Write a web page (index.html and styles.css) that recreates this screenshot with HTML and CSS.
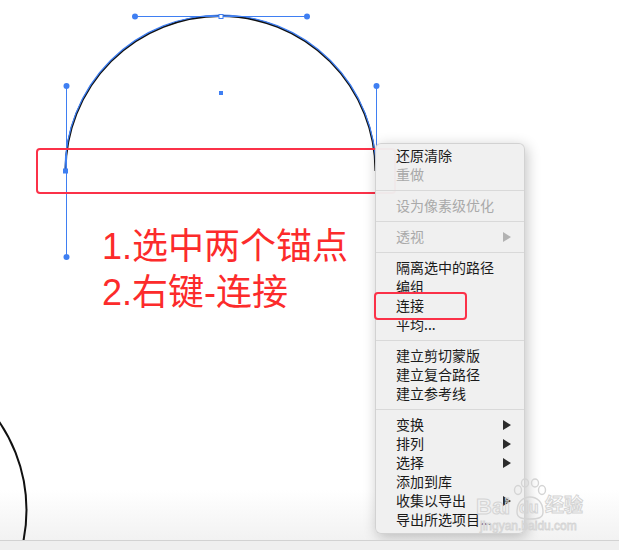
FILE: index.html
```html
<!DOCTYPE html>
<html lang="zh-CN">
<head>
    <meta charset="UTF-8">
    <title>连接锚点</title>
    <link rel="stylesheet" href="styles.css">
</head>
<body>

    <div class="workspace">
        <svg class="artboard" width="619" height="540" viewBox="0 0 619 540">
            <!-- selected path -->
            <path d="M65.5,171 A155,155 0 0 1 375.5,171" fill="none" stroke="#111" stroke-width="2"/>
            <path d="M65,170.5 A155.5,155.5 0 0 1 376,170.5" fill="none" stroke="#3f7ff2" stroke-width="1.2"/>

            <!-- handles -->
            <g stroke="#3f7ff2" stroke-width="1">
                <line x1="135" y1="16.5" x2="307" y2="16.5"/>
                <line x1="66.5" y1="86" x2="66.5" y2="257"/>
                <line x1="376.5" y1="86" x2="376.5" y2="171"/>
            </g>
            <g fill="#3f7ff2">
                <circle cx="135" cy="16.5" r="3"/>
                <circle cx="307" cy="16.5" r="3"/>
                <circle cx="66.5" cy="86" r="3"/>
                <circle cx="66.5" cy="257" r="3"/>
                <circle cx="376.5" cy="86" r="3"/>
                <rect x="63" y="168.5" width="5" height="5"/>
                <rect x="219" y="91" width="4" height="4"/>
            </g>
            <rect x="219" y="14.5" width="4" height="4" fill="#fff" stroke="#3f7ff2" stroke-width="1"/>

            <!-- other shape -->
            <circle cx="-129.5" cy="510" r="156" fill="none" stroke="#111" stroke-width="2"/>
        </svg>

        <div class="mark mark-anchors"></div>

        <div class="note">
            <p>1.选中两个锚点</p>
            <p>2.右键-连接</p>
        </div>

        <ul class="context-menu">
            <li>还原清除</li>
            <li class="disabled">重做</li>
            <li class="sep"></li>
            <li class="disabled">设为像素级优化</li>
            <li class="sep"></li>
            <li class="disabled sub">透视</li>
            <li class="sep"></li>
            <li>隔离选中的路径</li>
            <li>编组</li>
            <li>连接</li>
            <li>平均...</li>
            <li class="sep"></li>
            <li>建立剪切蒙版</li>
            <li>建立复合路径</li>
            <li>建立参考线</li>
            <li class="sep"></li>
            <li class="sub">变换</li>
            <li class="sub">排列</li>
            <li class="sub">选择</li>
            <li>添加到库</li>
            <li class="sub">收集以导出</li>
            <li>导出所选项目...</li>
        </ul>

        <div class="mark mark-item"></div>

        <div class="watermark">
            <svg class="paw" width="34" height="44" viewBox="0 0 34 44">
                <g fill="none" stroke="#d4d4d4" stroke-width="1.4">
                    <ellipse cx="5" cy="12" rx="3.5" ry="4.5"/>
                    <ellipse cx="12" cy="5" rx="3.5" ry="4"/>
                    <ellipse cx="22" cy="5" rx="3.5" ry="4"/>
                    <ellipse cx="29" cy="12" rx="3.5" ry="4.5"/>
                    <path d="M4,34 C4,24 10,19 17,19 C24,19 30,24 30,34 C30,40 25,41 17,41 C9,41 4,40 4,34 Z"/>
                </g>
            </svg>
            <span class="wm-bai">Bai</span>
            <span class="wm-du">du</span>
            <span class="wm-cn">经验</span>
            <span class="wm-url">jingyan.baidu.com</span>
        </div>
    </div>

    <div class="statusbar"></div>

</body>
</html>
```

FILE: styles.css
```css
body {
    margin: 0;
    padding: 0;
    width: 619px;
    height: 550px;
    overflow: hidden;
    background-color: #ffffff;
    font-family: "Noto Sans CJK SC", "Noto Sans", sans-serif;
}

.workspace {
    position: relative;
    height: 540px;
    overflow: hidden;
    background: linear-gradient(to bottom, #ffffff 0, #ffffff 490px, #f2f2f2 540px);
}

.artboard {
    position: absolute;
    left: 0;
    top: 0;
}

.statusbar {
    height: 9px;
    border-top: 1px solid #d2d2d2;
    background-color: #efefef;
}

/* red highlight frames */
.mark {
    position: absolute;
    border: 2px solid #fb3148;
    border-radius: 4px;
    box-sizing: border-box;
}

.mark-anchors {
    left: 36px;
    top: 148px;
    width: 360px;
    height: 46px;
}

.mark-item {
    left: 374px;
    top: 292px;
    width: 93px;
    height: 28px;
}

.note {
    position: absolute;
    left: 102px;
    top: 224px;
    color: #fc2b2b;
    font-family: "Liberation Sans", "Noto Sans CJK SC", sans-serif;
    font-size: 36px;
    line-height: 46px;
}

.note p {
    margin: 0;
}

/* context menu */
.context-menu {
    position: absolute;
    left: 375px;
    top: 143px;
    width: 150px;
    margin: 0;
    padding: 2px 0 4px;
    list-style: none;
    box-sizing: border-box;
    background-color: rgba(239, 239, 239, 0.97);
    border: 1px solid rgba(0, 0, 0, 0.12);
    border-radius: 6px;
    box-shadow: 2px 3px 14px rgba(0, 0, 0, 0.24);
    font-size: 14px;
    color: #1a1a1a;
}

.context-menu li {
    position: relative;
    height: 19px;
    line-height: 19px;
    padding-left: 20px;
    white-space: nowrap;
}

.context-menu li.disabled {
    color: #a9a9a9;
}

.context-menu li.sep {
    height: 1px;
    margin: 6px 0 5px;
    padding: 0;
    background-color: #d9d9d9;
}

.context-menu li.sub::after {
    content: "";
    position: absolute;
    right: 13px;
    top: 5px;
    border-left: 8px solid #2c2c2c;
    border-top: 5px solid transparent;
    border-bottom: 5px solid transparent;
}

.context-menu li.disabled.sub::after {
    border-left-color: #b2b2b2;
}

/* watermark */
.watermark {
    position: absolute;
    left: 0;
    top: 0;
    font-family: "Liberation Sans", "Noto Sans CJK SC", sans-serif;
    font-weight: bold;
    color: transparent;
    -webkit-text-stroke: 1px #d4d4d4;
}

.watermark span {
    position: absolute;
    line-height: 1;
    white-space: nowrap;
}

.paw {
    position: absolute;
    left: 513px;
    top: 478px;
}

.wm-bai {
    left: 476px;
    top: 496px;
    font-size: 22px;
}

.wm-du {
    left: 519px;
    top: 500px;
    font-size: 16px;
}

.wm-cn {
    left: 545px;
    top: 496px;
    font-size: 19px;
}

.wm-url {
    left: 480px;
    top: 520px;
    font-size: 12px;
    font-weight: normal;
    -webkit-text-stroke: 0.8px #d4d4d4;
}
```
